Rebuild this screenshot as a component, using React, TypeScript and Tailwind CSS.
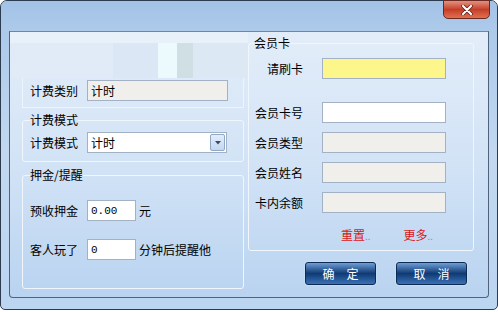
import React from "react";

const cjk = { fontFamily: '"Noto Sans CJK SC", "Noto Sans", sans-serif' };

function Input({ value, bg, w, mono }: { value?: string; bg: string; w: string; mono?: boolean }) {
  return (
    <div
      className={`${w} ${bg} h-[21px] border border-[#a3b1c4] flex items-center pl-[3px] text-[12px] leading-[14px] text-black`}
      style={mono ? { fontFamily: '"Liberation Mono", monospace', fontSize: 11 } : undefined}
    >
      {value}
    </div>
  );
}

function Btn({ a, b }: { a: string; b: string }) {
  return (
    <div className="w-[71px] h-[23px] rounded-[3px] border border-[#0d2a52] shadow-[0_0_0_1px_rgba(200,222,248,0.8)] bg-gradient-to-b from-[#6f9fd6] via-[#0f3a74] to-[#3a72b6] flex items-center justify-center gap-[12px] text-white text-[12px] leading-[14px]">
      <span>{a}</span>
      <span>{b}</span>
    </div>
  );
}

export default function App() {
  return (
    <div className="w-[498px] h-[312px] bg-white" style={cjk}>
      <div className="w-[498px] h-[310px] border border-[#2c3b4e] rounded-t-[7px] rounded-b-[5px] bg-gradient-to-b from-[#a7c6e9] via-[#c2d8f0] to-[#bcd5f0] flex flex-col">
        {/* title bar */}
        <div className="h-[30px] flex justify-end pr-[7px] bg-gradient-to-b from-[#a2c2e6] to-[#adcaea] rounded-t-[6px]">
          <div className="-mt-px w-[47px] h-[19px] rounded-b-[5px] border border-[#6a2a22] bg-gradient-to-b from-[#e2907f] via-[#c53d28] to-[#e0704f] flex items-center justify-center">
            <svg width="12" height="10" viewBox="0 0 12 10">
              <path d="M2 1 L10 9 M10 1 L2 9" stroke="#5a1a12" strokeWidth="3.6" strokeLinecap="round" />
              <path d="M2 1 L10 9 M10 1 L2 9" stroke="#ffffff" strokeWidth="2.2" strokeLinecap="round" />
            </svg>
          </div>
        </div>
        {/* client area */}
        <div className="mx-[8px] h-[267px] border border-[#4f647c] border-t-[#6e86a2] rounded-b-[4px] bg-gradient-to-b from-[#e3edf9] via-[#d2e3f6] to-[#b9d3f0] flex text-[12px] leading-[14px] text-black">
          {/* left column */}
          <div className="w-[238px] flex flex-col">
            <div className="h-[11px] bg-[#e8f0fa]" />
            <div className="h-[35px] flex">
              <div className="w-[103px] bg-[#e1ebf8]" />
              <div className="w-[45px] bg-[#dbe7f5]" />
              <div className="w-[19px] bg-[#ecf9fd]" />
              <div className="w-[16px] bg-[#cfdfe3]" />
              <div className="flex-1 bg-[#dde8f5]" />
            </div>
            <div className="ml-[12px] w-[222px] h-[30px] border-x border-b border-[#eef4fb] pt-[2px] pl-[7px] flex">
              <div className="w-[57px] h-[21px] flex items-center">计费类别</div>
              <Input value="计时" bg="bg-[#f1efec]" w="w-[141px]" />
            </div>
            <fieldset className="ml-[12px] w-[222px] mt-[5px] border border-[#f1f6fc] rounded-[3px] pl-[7px] pt-[5px] pb-[8px]">
              <legend className="leading-[14px]">计费模式</legend>
              <div className="flex">
                <div className="w-[57px] h-[21px] flex items-center">计费模式</div>
                <div className="w-[140px] h-[21px] bg-white border border-[#a3b1c4] flex items-center justify-between pl-[3px] pr-[1px]">
                  <span>计时</span>
                  <div className="w-[15px] h-[17px] border border-[#8ea8c8] rounded-[2px] bg-gradient-to-b from-[#e3eefb] to-[#c3d7ef] flex items-center justify-center">
                    <svg width="6" height="4" viewBox="0 0 6 4">
                      <path d="M0 0 H6 L3 3.5 Z" fill="#3b4c6b" />
                    </svg>
                  </div>
                </div>
              </div>
            </fieldset>
            <fieldset className="ml-[12px] w-[222px] mt-[6px] border border-[#f1f6fc] rounded-[3px] pl-[7px] pt-[18px] pb-[28px]">
              <legend className="leading-[14px]">押金/提醒</legend>
              <div className="flex items-center">
                <div className="w-[57px]">预收押金</div>
                <Input value="0.00" bg="bg-white" w="w-[49px]" mono />
                <span className="ml-[3px]">元</span>
              </div>
              <div className="flex items-center mt-[18px]">
                <div className="w-[57px]">客人玩了</div>
                <Input value="0" bg="bg-white" w="w-[49px]" mono />
                <span className="ml-[3px]">分钟后提醒他</span>
              </div>
            </fieldset>
          </div>
          {/* right column */}
          <div className="flex flex-col">
            <fieldset className="w-[226px] mt-[4px] border border-[#f1f6fc] rounded-[3px] pt-[8px] pb-[7px]">
              <legend className="ml-[5px] leading-[14px]">会员卡</legend>
              <div className="flex flex-col">
                <div className="flex items-center">
                  <div className="w-[54px] text-right">请刷卡</div>
                  <div className="ml-[19px]">
                    <Input bg="bg-[#fdf68a]" w="w-[124px]" />
                  </div>
                </div>
                <div className="flex items-center mt-[23px]">
                  <div className="w-[54px] text-right">会员卡号</div>
                  <div className="ml-[19px]">
                    <Input bg="bg-white" w="w-[124px]" />
                  </div>
                </div>
                <div className="flex items-center mt-[9px]">
                  <div className="w-[54px] text-right">会员类型</div>
                  <div className="ml-[19px]">
                    <Input bg="bg-[#f0efec]" w="w-[124px]" />
                  </div>
                </div>
                <div className="flex items-center mt-[9px]">
                  <div className="w-[54px] text-right">会员姓名</div>
                  <div className="ml-[19px]">
                    <Input bg="bg-[#f0efec]" w="w-[124px]" />
                  </div>
                </div>
                <div className="flex items-center mt-[9px]">
                  <div className="w-[54px] text-right">卡内余额</div>
                  <div className="ml-[19px]">
                    <Input bg="bg-[#f0efec]" w="w-[124px]" />
                  </div>
                </div>
                <div className="flex mt-[15px] pl-[92px] gap-[33px] text-[#d81818]">
                  <span>
                    重置<span className="text-[#c07a7a] text-[10px]">..</span>
                  </span>
                  <span>
                    更多<span className="text-[#c07a7a] text-[10px]">..</span>
                  </span>
                </div>
              </div>
            </fieldset>
            <div className="flex mt-[11px] ml-[57px] gap-[20px]">
              <Btn a="确" b="定" />
              <Btn a="取" b="消" />
            </div>
          </div>
        </div>
      </div>
    </div>
  );
}
